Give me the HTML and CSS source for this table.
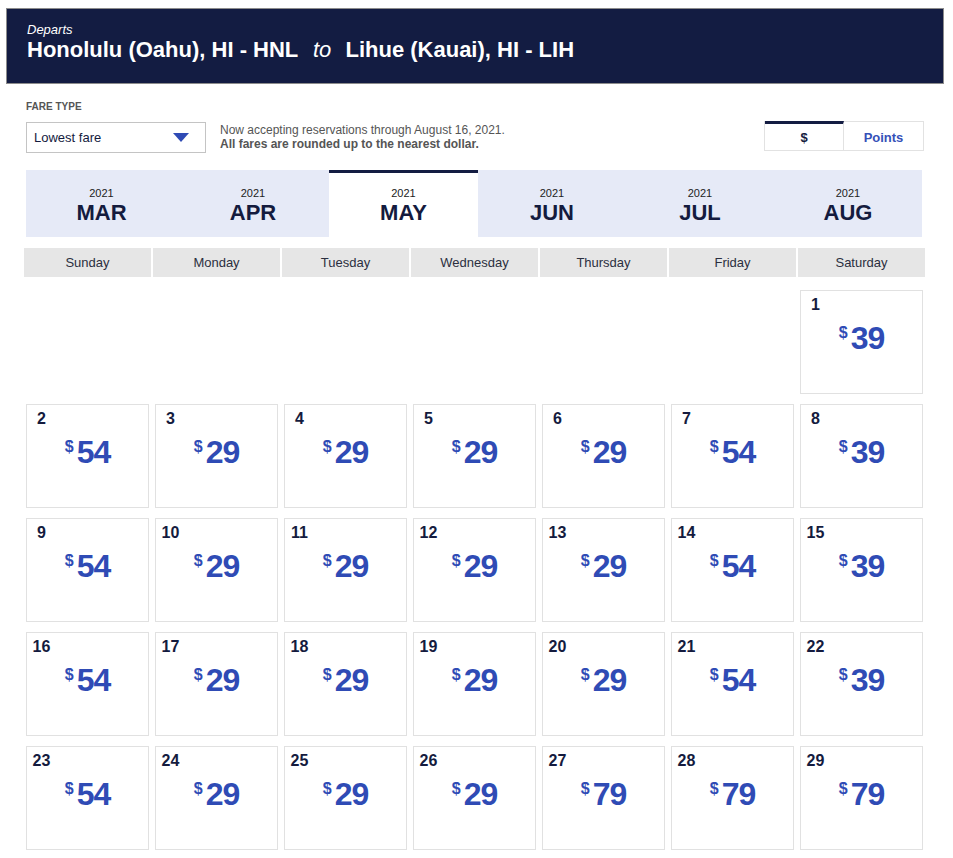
FILE: index.html
```html
<!DOCTYPE html>
<html lang="en">
<head>
<meta charset="utf-8">
<title>Fare calendar</title>
<link rel="stylesheet" href="styles.css">
</head>
<body>
<div class="page">
  <header class="route">
    <div class="departs">Departs</div>
    <h1 class="route-title">Honolulu (Oahu), HI - HNL <span class="to">to</span> Lihue (Kauai), HI - LIH</h1>
  </header>

  <div class="content">
    <div class="fare-row">
      <div class="fare-left">
        <div class="fare-label">FARE TYPE</div>
        <div class="fare-controls">
          <div class="select">
            <span>Lowest fare</span>
            <svg class="caret" width="16" height="9" viewBox="0 0 16 9"><path d="M0 0 L16 0 L8 9 Z" fill="#2f4bb5"/></svg>
          </div>
          <div class="note">
            <div>Now accepting reservations through August 16, 2021.</div>
            <div class="note-bold">All fares are rounded up to the nearest dollar.</div>
          </div>
        </div>
      </div>
      <div class="toggle">
        <div class="toggle-item active">$</div>
        <div class="toggle-item points">Points</div>
      </div>
    </div>

    <nav class="months">
      <div class="month"><span class="year">2021</span><span class="mname">MAR</span></div>
      <div class="month"><span class="year">2021</span><span class="mname">APR</span></div>
      <div class="month selected"><span class="year">2021</span><span class="mname">MAY</span></div>
      <div class="month"><span class="year">2021</span><span class="mname">JUN</span></div>
      <div class="month"><span class="year">2021</span><span class="mname">JUL</span></div>
      <div class="month"><span class="year">2021</span><span class="mname">AUG</span></div>
    </nav>

    <div class="weekdays">
      <div>Sunday</div><div>Monday</div><div>Tuesday</div><div>Wednesday</div><div>Thursday</div><div>Friday</div><div>Saturday</div>
    </div>

    <div class="days">
      <div class="empty"></div><div class="empty"></div><div class="empty"></div><div class="empty"></div><div class="empty"></div><div class="empty"></div>
      <div class="day"><div class="num">1</div><div class="price"><span class="cur">$</span><span class="amt">39</span></div></div>

      <div class="day"><div class="num">2</div><div class="price"><span class="cur">$</span><span class="amt">54</span></div></div>
      <div class="day"><div class="num">3</div><div class="price"><span class="cur">$</span><span class="amt">29</span></div></div>
      <div class="day"><div class="num">4</div><div class="price"><span class="cur">$</span><span class="amt">29</span></div></div>
      <div class="day"><div class="num">5</div><div class="price"><span class="cur">$</span><span class="amt">29</span></div></div>
      <div class="day"><div class="num">6</div><div class="price"><span class="cur">$</span><span class="amt">29</span></div></div>
      <div class="day"><div class="num">7</div><div class="price"><span class="cur">$</span><span class="amt">54</span></div></div>
      <div class="day"><div class="num">8</div><div class="price"><span class="cur">$</span><span class="amt">39</span></div></div>

      <div class="day"><div class="num">9</div><div class="price"><span class="cur">$</span><span class="amt">54</span></div></div>
      <div class="day"><div class="num">10</div><div class="price"><span class="cur">$</span><span class="amt">29</span></div></div>
      <div class="day"><div class="num">11</div><div class="price"><span class="cur">$</span><span class="amt">29</span></div></div>
      <div class="day"><div class="num">12</div><div class="price"><span class="cur">$</span><span class="amt">29</span></div></div>
      <div class="day"><div class="num">13</div><div class="price"><span class="cur">$</span><span class="amt">29</span></div></div>
      <div class="day"><div class="num">14</div><div class="price"><span class="cur">$</span><span class="amt">54</span></div></div>
      <div class="day"><div class="num">15</div><div class="price"><span class="cur">$</span><span class="amt">39</span></div></div>

      <div class="day"><div class="num">16</div><div class="price"><span class="cur">$</span><span class="amt">54</span></div></div>
      <div class="day"><div class="num">17</div><div class="price"><span class="cur">$</span><span class="amt">29</span></div></div>
      <div class="day"><div class="num">18</div><div class="price"><span class="cur">$</span><span class="amt">29</span></div></div>
      <div class="day"><div class="num">19</div><div class="price"><span class="cur">$</span><span class="amt">29</span></div></div>
      <div class="day"><div class="num">20</div><div class="price"><span class="cur">$</span><span class="amt">29</span></div></div>
      <div class="day"><div class="num">21</div><div class="price"><span class="cur">$</span><span class="amt">54</span></div></div>
      <div class="day"><div class="num">22</div><div class="price"><span class="cur">$</span><span class="amt">39</span></div></div>

      <div class="day"><div class="num">23</div><div class="price"><span class="cur">$</span><span class="amt">54</span></div></div>
      <div class="day"><div class="num">24</div><div class="price"><span class="cur">$</span><span class="amt">29</span></div></div>
      <div class="day"><div class="num">25</div><div class="price"><span class="cur">$</span><span class="amt">29</span></div></div>
      <div class="day"><div class="num">26</div><div class="price"><span class="cur">$</span><span class="amt">29</span></div></div>
      <div class="day"><div class="num">27</div><div class="price"><span class="cur">$</span><span class="amt">79</span></div></div>
      <div class="day"><div class="num">28</div><div class="price"><span class="cur">$</span><span class="amt">79</span></div></div>
      <div class="day"><div class="num">29</div><div class="price"><span class="cur">$</span><span class="amt">79</span></div></div>
    </div>
  </div>
</div>
</body>
</html>
```

FILE: styles.css
```css
* { box-sizing: border-box; }

html, body {
  margin: 0;
  padding: 0;
  background: #ffffff;
  font-family: "Liberation Sans", Arial, Helvetica, sans-serif;
  color: #141b3e;
}

.page {
  margin: 8px 9px 0 6px;
}

/* Header */
.route {
  background: #131c42;
  border: 1px solid #8c8c8c;
  padding: 14px 20px 21px 20px;
  color: #ffffff;
}

.departs {
  font-size: 13px;
  line-height: 14px;
  font-style: italic;
}

.route-title {
  margin: 0;
  font-size: 22px;
  line-height: 25px;
  font-weight: bold;
}

.route-title .to {
  font-weight: normal;
  font-style: italic;
  margin: 0 8px 0 9px;
}

/* Content */
.content {
  padding: 0 19px 0 18px;
}

.fare-row {
  display: flex;
  justify-content: space-between;
  align-items: flex-end;
  margin: 17px 1px 0 2px;
}

.fare-label {
  font-size: 10px;
  line-height: 12px;
  font-weight: bold;
  color: #555555;
  margin-bottom: 9px;
}

.fare-controls {
  display: flex;
  align-items: flex-start;
}

.select {
  width: 180px;
  height: 31px;
  border: 1px solid #c4c4c4;
  display: flex;
  align-items: center;
  justify-content: space-between;
  padding: 0 16px 0 7px;
  font-size: 13px;
  color: #141b3e;
}

.caret { display: block; }

.note {
  margin-left: 14px;
  padding-top: 1px;
  font-size: 12px;
  line-height: 14px;
  color: #555555;
}

.note-bold { font-weight: bold; }

.toggle {
  display: flex;
  border: 1px solid #e2e2e2;
  height: 30px;
  margin-bottom: 2px;
}

.toggle-item {
  width: 79px;
  display: flex;
  align-items: center;
  justify-content: center;
  font-size: 13px;
  font-weight: bold;
  border-top: 3px solid transparent;
  margin-top: -1px;
}

.toggle-item.active {
  border-top-color: #131c42;
  color: #141b3e;
  border-right: 1px solid #e2e2e2;
}

.toggle-item.points {
  color: #3550b8;
}

/* Month tabs */
.months {
  display: grid;
  grid-template-columns: 151px 152px 149px 148px 148px 148px;
  margin: 17px 3px 0 2px;
  background: #e6eaf7;
}

.month {
  height: 67px;
  border-top: 3px solid #e6eaf7;
  padding-top: 13px;
  display: flex;
  flex-direction: column;
  align-items: center;
}

.month.selected {
  background: #ffffff;
  border-top-color: #131c42;
}

.year {
  font-size: 11px;
  line-height: 14px;
  color: #222222;
}

.mname {
  font-size: 22px;
  line-height: 25px;
  font-weight: bold;
  color: #141b3e;
}

/* Weekdays */
.weekdays {
  display: grid;
  grid-template-columns: repeat(7, 127px);
  column-gap: 2px;
  margin-top: 11px;
}

.weekdays div {
  background: #e6e6e6;
  height: 29px;
  display: flex;
  align-items: center;
  justify-content: center;
  font-size: 13px;
  color: #2b2f40;
}

/* Days */
.days {
  display: grid;
  grid-template-columns: repeat(7, 127px);
  column-gap: 2px;
  row-gap: 10px;
  margin-top: 13px;
}

.day {
  margin: 0 2px;
  height: 104px;
  border: 1px solid #e1e1e1;
  padding-top: 5px;
}

.num {
  width: 21px;
  margin-left: 4px;
  text-align: center;
  font-size: 16px;
  line-height: 18px;
  font-weight: bold;
  color: #141b3e;
}

.price {
  display: flex;
  justify-content: center;
  align-items: flex-start;
  margin-top: 8px;
  color: #2f4bb5;
  font-weight: bold;
}

.cur {
  font-size: 16px;
  line-height: 16px;
  margin-top: 3px;
  margin-right: 3px;
}

.amt {
  font-size: 32px;
  line-height: 32px;
  letter-spacing: -1px;
}
```
